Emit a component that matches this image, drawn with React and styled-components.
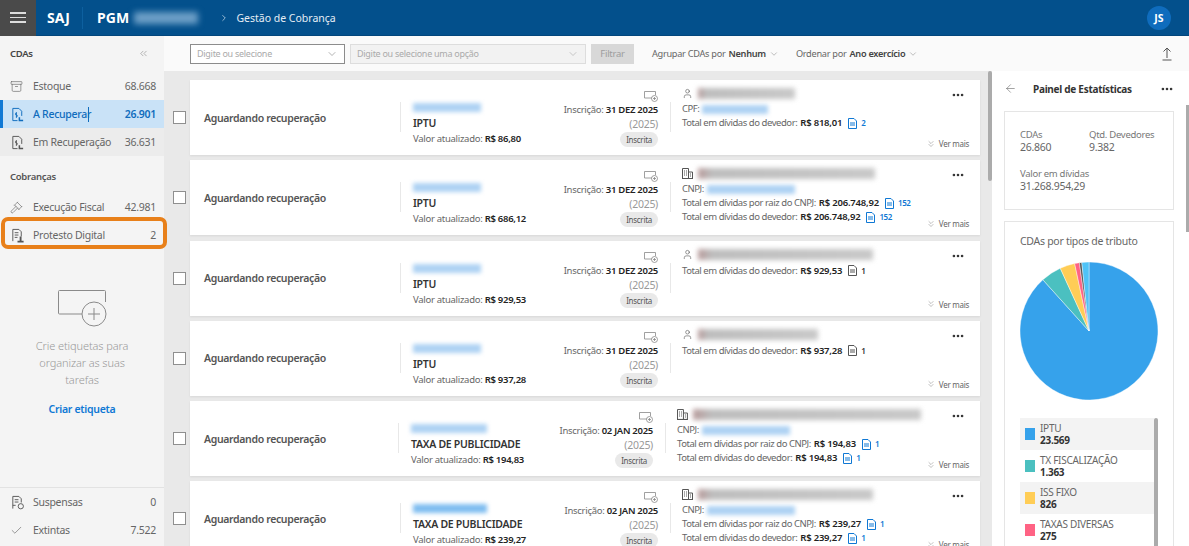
import React from 'react';
import styled, { createGlobalStyle } from 'styled-components';
import { ChevronDown, ChevronRight, ChevronsLeft, ChevronsDown, ArrowLeft, Check, Gavel, User, Archive, MoreHorizontal } from 'lucide-react';

const Global = createGlobalStyle`
  html, body { margin: 0; padding: 0; height: 100%; overflow: hidden; }
  body { font-family: "Noto Sans", "Open Sans", sans-serif; font-size: 10.5px; color: #333; background: #fff; letter-spacing: -0.28px; }
  * { box-sizing: border-box; }
`;

const Page = styled.div`display:flex;flex-direction:column;width:1189px;height:546px;overflow:hidden;`;
const Header = styled.header`display:flex;align-items:center;height:36px;background:#03508c;color:#fff;flex:none;border-bottom:1px solid #02467c;`;
const MenuCell = styled.div`width:36px;height:36px;background:#4a4a4a;display:flex;flex-direction:column;justify-content:center;align-items:center;gap:3px;`;
const MenuLine = styled.span`display:block;width:16px;height:1.5px;background:#ddd;`;
const Brand = styled.span`font-weight:700;font-size:14px;letter-spacing:.1px;margin-left:${p => p.$ml}px;`;
const HeadSep = styled.span`width:1px;height:22px;background:#0d609f;margin-left:12px;`;
const BlurHead = styled.span`width:64px;height:12px;margin-left:5px;background:#6d9fc7;filter:blur(3px);`;
const Crumb = styled.span`font-size:10.5px;color:#e6eef5;margin-left:7px;letter-spacing:0;`;
const Avatar = styled.div`margin-left:auto;margin-right:18px;width:24px;height:24px;border-radius:50%;background:#0f6cbd;display:flex;align-items:center;justify-content:center;font-size:10.5px;font-weight:700;letter-spacing:0;`;
const Body = styled.div`display:flex;flex:1;min-height:0;`;

const Side = styled.aside`position:relative;z-index:2;width:164px;flex:none;background:#f4f4f4;display:flex;flex-direction:column;`;
const SideHead = styled.div`display:flex;justify-content:space-between;align-items:center;height:36px;padding:0 15px 2px 10px;font-size:9.5px;font-weight:600;color:#444;`;
const SectionLabel = styled.div`font-size:9.5px;font-weight:600;color:#555;height:37px;padding:3px 10px 0;display:flex;align-items:center;`;
const NavRow = styled.div`position:relative;display:flex;align-items:center;height:28px;padding:0 8px 0 10px;font-size:10.5px;color:${p => p.$active ? '#0f6cbd' : '#666'};background:${p => p.$active ? '#c9e2f7' : p.$hover ? '#ececec' : 'transparent'};font-weight:${p => p.$active ? 500 : 400};border-left:${p => p.$active ? '3px solid #0f78d4' : 'none'};padding-left:${p => p.$active ? 7 : 10}px;svg{flex:none;}`;
const NavLabel = styled.span`margin-left:${p => p.$ml ?? 10}px;position:relative;`;
const NavCount = styled.span`margin-left:auto;font-weight:${p => p.$active ? 600 : 400};`;
const Caret = styled.span`position:absolute;right:2px;top:0;width:1px;height:15px;background:#0f6cbd;`;
const Highlight = styled.span`position:absolute;left:1px;right:-3px;top:-4px;bottom:0;border:4px solid #e8801a;border-radius:7px;pointer-events:none;`;
const Empty = styled.div`display:flex;flex-direction:column;align-items:center;margin-top:41px;color:#999;font-size:11px;line-height:17px;text-align:center;padding:0 28px;`;
const EmptyText = styled.p`margin:10px 0 0;font-weight:300;letter-spacing:-0.1px;`;
const EmptyLink = styled.a`margin-top:13px;color:#0f78d4;font-weight:600;font-size:10.5px;`;
const SideFooter = styled.div`margin-top:auto;border-top:1px solid #e2e2e2;padding-bottom:2px;`;

const Main = styled.div`flex:1;display:flex;flex-direction:column;min-width:0;`;
const Toolbar = styled.div`height:35px;flex:none;background:#fafafa;display:flex;align-items:center;padding-left:26px;padding-right:17px;`;
const Select = styled.div`display:flex;align-items:center;justify-content:space-between;height:20px;width:${p => p.$w}px;margin-right:5px;padding:0 6px;font-size:9px;color:#aaa;background:${p => p.$off ? '#f2f2f2' : '#fff'};border:1px solid ${p => p.$off ? '#ddd' : '#8c8c8c'};`;
const FilterBtn = styled.div`width:43px;height:20px;background:#d8d8d8;color:#9d9d9d;font-size:9.5px;display:flex;align-items:center;justify-content:center;margin-right:18px;`;
const Sort = styled.div`display:flex;align-items:center;gap:3px;font-size:9.2px;color:#666;margin-right:${p => p.$mr}px;b{color:#444;font-weight:600;}`;
const UploadWrap = styled.div`margin-left:auto;display:flex;`;

const Content = styled.div`flex:1;display:flex;min-height:0;`;
const List = styled.div`position:relative;flex:1;background:#e9e9e9;padding:9px 12px 0 9px;display:flex;flex-direction:column;gap:5.3px;overflow:hidden;`;
const ListThumb = styled.span`position:absolute;right:0;top:0;width:4px;height:110px;background:#ababab;border-radius:2px;`;
const Row = styled.div`display:flex;align-items:center;flex:none;`;
const Check2 = styled.span`width:13px;height:13px;border:1px solid #8f8f8f;background:#fff;margin-right:4px;flex:none;`;
const Card = styled.div`width:790px;height:75px;background:#fff;box-shadow:0 1px 2px rgba(0,0,0,.08);display:flex;flex:none;`;
const Status = styled.div`width:${p => p.$w}px;padding-left:14px;align-self:center;font-size:10.5px;font-weight:600;color:#555;letter-spacing:-0.35px;`;
const Divider = styled.span`width:1px;height:30px;background:#e8e8e8;margin-top:22px;flex:none;`;
const Left = styled.div`width:${p => p.$w}px;padding:23px 0 0 ${p => p.$pl}px;flex:none;display:flex;flex-direction:column;`;
const BlurBar = styled.span`display:block;height:${p => p.$h || 9}px;width:${p => p.$w}px;margin-left:${p => p.$ml || 0}px;background:${p => p.$c || '#aed2f3'};filter:blur(2px);`;
const Tax = styled.div`font-size:10.5px;font-weight:600;color:#333;margin-top:4px;line-height:14px;`;
const Worth = styled.div`font-size:9.5px;color:#666;margin-top:2px;line-height:14px;white-space:nowrap;b{color:#222;font-weight:600;}`;
const Right = styled.div`width:${p => p.$w}px;flex:none;display:flex;flex-direction:column;align-items:flex-end;padding:11px 12px 0 0;`;
const Insc = styled.div`font-size:9.5px;color:#666;line-height:14px;margin-top:1px;white-space:nowrap;b{color:#222;font-weight:600;}`;
const Year = styled.div`font-size:10.5px;color:#999;line-height:14px;`;
const Badge = styled.span`margin-top:1px;height:15px;padding:0 6px;border-radius:8px;background:#e9e9e9;font-size:8px;color:#555;display:flex;align-items:center;`;
const Debtor = styled.div`flex:1;padding:5px 0 0 11px;display:flex;flex-direction:column;min-width:0;`;
const NameRow = styled.div`display:flex;align-items:center;gap:5px;height:17px;color:#555;`;
const NameBlur = styled.span`display:block;height:11px;width:${p => p.$w}px;background:linear-gradient(90deg,#b79a9a 0,#bdbdbd 8%,#c8c8c8 100%);filter:blur(2.5px);`;
const Line = styled.div`font-size:9.5px;letter-spacing:-0.45px;color:#666;line-height:14px;white-space:nowrap;display:flex;align-items:center;b{color:#222;font-weight:600;margin-left:3px;letter-spacing:-0.2px;}`;
const Spacer = styled.div`height:1px;`;
const DocCount = styled.span`display:inline-flex;align-items:center;gap:4px;margin-left:6px;color:${p => p.$plain ? '#333' : '#0f78d4'};font-size:8px;font-weight:600;`;
const Actions = styled.div`width:59px;flex:none;display:flex;flex-direction:column;justify-content:space-between;align-items:flex-end;padding:8px 11px 6px 0;color:#333;`;
const Dots = styled.span`display:flex;margin-right:4px;`;
const More = styled.div`display:flex;align-items:center;gap:3px;font-size:8px;color:#666;white-space:nowrap;`;

const Panel = styled.aside`position:relative;width:197px;flex:none;background:#fff;padding:0 15px 0 12px;overflow:hidden;`;
const PanelThumb = styled.span`position:absolute;right:0;top:34px;width:3px;height:127px;background:#ababab;`;
const PanelHead = styled.div`display:flex;align-items:center;height:40px;padding-bottom:5px;color:#555;`;
const PanelTitle = styled.span`margin-left:16px;font-size:10px;font-weight:700;color:#333;flex:1;`;
const StatCard = styled.div`border:1px solid #e5e5e5;padding:${p => p.$p || '16px 15px'};margin-bottom:11px;`;
const StatGrid = styled.div`display:grid;grid-template-columns:69px 1fr;row-gap:13px;`;
const StatCell = styled.div`font-size:9.5px;line-height:13px;color:#777;white-space:nowrap;`;
const StatValue = styled.div`font-size:10.5px;color:#666;`;
const ChartTitle = styled.div`font-size:10.5px;color:#666;line-height:14px;`;
const PieWrap = styled.div`margin-top:13px;margin-left:-1px;height:142px;`;
const LegendBox = styled.div`position:relative;margin-top:15px;margin-right:4px;`;
const LegendThumb = styled.span`position:absolute;right:-4px;top:0;bottom:-40px;width:4px;background:#ababab;border-radius:2px;`;
const LegendRow = styled.div`display:flex;align-items:center;height:32px;padding-left:5px;background:${p => p.$alt ? '#f3f3f3' : '#fff'};`;
const Swatch = styled.span`width:10px;height:12px;background:${p => p.$c};margin-right:5px;flex:none;`;
const LegendText = styled.div`font-size:10px;line-height:12.5px;color:#666;b{display:block;color:#333;font-weight:700;}`;

const DocIcon = ({ c = '#555', s = 15 }) => (
  <svg width={s} height={s} viewBox="0 0 16 16" fill="none" stroke={c} strokeWidth="1">
    <path d="M3 1.5h6.500L12.500 4.500v5M3 1.500v13h5" />
    <path d="M6.800 6.500c-1.500 0-1.500 2 0 2s1.500 2 0 2M6.800 5.500v6" />
    <path d="M10 11v3.500h4" strokeWidth="1.600" />
  </svg>
);
const FileIcon = ({ c = '#0f78d4' }) => (
  <svg width="9" height="11" viewBox="0 0 9 11" fill="none" stroke={c} strokeWidth="1">
    <path d="M.5.500h5.500l2.500 2.500v7.500h-8zM2 5h5M2 7h5" />
  </svg>
);
const ProtestIcon = () => (
  <svg width="15" height="15" viewBox="0 0 16 16" fill="none" stroke="#555" strokeWidth="1">
    <path d="M3 14V1.500h6.500L12 4v5M5 5h4M5 7.500h4M5 10h3" />
    <path d="M8 14.500h6.500M11.300 9v5" strokeWidth="2" />
  </svg>
);
const SuspIcon = () => (
  <svg width="15" height="15" viewBox="0 0 16 16" fill="none" stroke="#555" strokeWidth="1">
    <path d="M3 14.500V1.500h6.500L12 4v4M5 5h4M5 7.500h4" />
    <circle cx="11.500" cy="12" r="2.800" />
    <path d="M3 11h3" />
  </svg>
);
const Building = () => (
  <svg width="11" height="11" viewBox="0 0 11 11" fill="none" stroke="#555" strokeWidth="1">
    <path d="M.5 10.500v-10h6v10zM6.500 4h4v6.500h-4M0 10.500h11M2 3h1M4 3h1M2 5h1M4 5h1M2 7h1M4 7h1M8 6h1M8 8h1" />
  </svg>
);
const TagAdd = ({ small }) => small ? (
  <svg width="14" height="11" viewBox="0 0 14 11" fill="none" stroke="#888" strokeWidth=".8">
    <path d="M8 7H.5V.5h11V4" />
    <circle cx="10.500" cy="7.500" r="3" />
    <path d="M10.500 6v3M9 7.500h3" />
  </svg>
) : (
  <svg width="49" height="37" viewBox="0 0 49 37" fill="none" stroke="#8a8a8a" strokeWidth="1">
    <path d="M24 24H1.500a1 1 0 0 1-1-1V1.500a1 1 0 0 1 1-1h45a1 1 0 0 1 1 1V12" />
    <circle cx="36" cy="24" r="12" />
    <path d="M36 18v12M30 24h12" />
  </svg>
);
const Upload = () => (
  <svg width="10" height="14" viewBox="0 0 10 14" fill="none" stroke="#555" strokeWidth="1">
    <path d="M5 11V1M1.500 4.500 5 1l3.500 3.500M.5 13h9" />
  </svg>
);

const polar = (a, r = 69) => {
  const t = (a - 90) * Math.PI / 180;
  return [70 + r * Math.cos(t), 70 + r * Math.sin(t)];
};
const Slice = ({ from, to, c }) => {
  const [x1, y1] = polar(from);
  const [x2, y2] = polar(to);
  return <path d={`M70 70L${x1} ${y1}A69 69 0 ${to - from > 180 ? 1 : 0} 1 ${x2} ${y2}Z`} fill={c} stroke="#fff" strokeWidth=".4" />;
};
const slices = [
  [0, 318, '#36a2eb'], [318, 335.400, '#4bc0c0'], [335.400, 348, '#ffcd56'],
  [348, 352, '#ff6384'], [352, 354, '#555'], [354, 360, '#4fc3f7'],
];

const cards = [
  { id: 68, tax: 'IPTU', date: '31 DEZ 2025', year: '(2025)', val: 'R$ 86,80', kind: 'p', name: 97, doc: 'CPF:', docW: 66, lines: [['Total em dívidas do devedor:', 'R$ 818,01', '2']] },
  { id: 68, tax: 'IPTU', date: '31 DEZ 2025', year: '(2025)', val: 'R$ 686,12', kind: 'c', name: 177, doc: 'CNPJ:', docW: 88, lines: [['Total em dívidas por raiz do CNPJ:', 'R$ 206.748,92', '152'], ['Total em dívidas do devedor:', 'R$ 206.748,92', '152']] },
  { id: 68, tax: 'IPTU', date: '31 DEZ 2025', year: '(2025)', val: 'R$ 929,53', kind: 'p', name: 175, lines: [['Total em dívidas do devedor:', 'R$ 929,53', '1', true]] },
  { id: 68, tax: 'IPTU', date: '31 DEZ 2025', year: '(2025)', val: 'R$ 937,28', kind: 'p', name: 120, lines: [['Total em dívidas do devedor:', 'R$ 937,28', '1', true]] },
  { id: 76, tax: 'TAXA DE PUBLICIDADE', date: '02 JAN 2025', year: '(2025)', val: 'R$ 194,83', kind: 'c', name: 230, shift: true, doc: 'CNPJ:', docW: 88, lines: [['Total em dívidas por raiz do CNPJ:', 'R$ 194,83', '1'], ['Total em dívidas do devedor:', 'R$ 194,83', '1']] },
  { id: 74, tax: 'TAXA DE PUBLICIDADE', date: '02 JAN 2025', year: '(2025)', val: 'R$ 239,27', kind: 'c', name: 175, strong: true, doc: 'CNPJ:', docW: 88, lines: [['Total em dívidas por raiz do CNPJ:', 'R$ 239,27', '1'], ['Total em dívidas do devedor:', 'R$ 239,27', '1']] },
];

const CdaCard = ({ c }) => (
  <Row>
    <Check2 />
    <Card>
      <Status $w={c.shift ? 208 : 210}>Aguardando recuperação</Status>
      <Divider />
      <Left $w={c.shift ? 160 : 158} $pl={12}>
        <BlurBar $w={c.id} $c={c.strong ? '#7fbdf0' : undefined} />
        <Tax>{c.tax}</Tax>
        <Worth>Valor atualizado: <b>{c.val}</b></Worth>
      </Left>
      <Right $w={c.shift ? 106 : 111}>
        <TagAdd small />
        <Insc>Inscrição: <b>{c.date}</b></Insc>
        <Year>{c.year}</Year>
        <Badge>Inscrita</Badge>
      </Right>
      <Divider />
      <Debtor>
        <NameRow>
          {c.kind === 'p' ? <User size={11} strokeWidth={1.3} /> : <Building />}
          <NameBlur $w={c.name} />
        </NameRow>
        {c.doc ? <Line>{c.doc}<BlurBar $w={c.docW} $ml={3} /></Line> : <Spacer />}
        {c.lines.map((l, i) => (
          <Line key={i}>{l[0]}<b>{l[1]}</b>
            <DocCount $plain={l[3]}><FileIcon c={l[3] ? '#555' : '#0f78d4'} />{l[2]}</DocCount>
          </Line>
        ))}
      </Debtor>
      <Actions>
        <Dots><MoreHorizontal size={14} strokeWidth={2.5} /></Dots>
        <More><ChevronsDown size={10} strokeWidth={1} />Ver mais</More>
      </Actions>
    </Card>
  </Row>
);

export default function App() {
  return (
    <Page>
      <Global />
      <Header>
        <MenuCell><MenuLine /><MenuLine /><MenuLine /></MenuCell>
        <Brand $ml={11}>SAJ</Brand>
        <HeadSep />
        <Brand $ml={14}>PGM</Brand>
        <BlurHead />
        <ChevronRight size={10} style={{ marginLeft: 21 }} color="#b6cfe3" />
        <Crumb>Gestão de Cobrança</Crumb>
        <Avatar>JS</Avatar>
      </Header>
      <Body>
        <Side>
          <SideHead>CDAs<ChevronsLeft size={11} strokeWidth={1} color="#666" /></SideHead>
          <NavRow><Archive size={13} strokeWidth={1.2} /><NavLabel>Estoque</NavLabel><NavCount>68.668</NavCount></NavRow>
          <NavRow $active><DocIcon c="#0f6cbd" /><NavLabel $ml={8}>A Recuperar<Caret /></NavLabel><NavCount $active>26.901</NavCount></NavRow>
          <NavRow $hover><DocIcon /><NavLabel $ml={8}>Em Recuperação</NavLabel><NavCount>36.631</NavCount></NavRow>
          <SectionLabel>Cobranças</SectionLabel>
          <NavRow><Gavel size={13} strokeWidth={1.2} /><NavLabel>Execução Fiscal</NavLabel><NavCount>42.981</NavCount></NavRow>
          <NavRow><ProtestIcon /><NavLabel $ml={8}>Protesto Digital</NavLabel><NavCount>2</NavCount><Highlight /></NavRow>
          <Empty>
            <TagAdd />
            <EmptyText>Crie etiquetas para organizar as suas tarefas</EmptyText>
            <EmptyLink>Criar etiqueta</EmptyLink>
          </Empty>
          <SideFooter>
            <NavRow><SuspIcon /><NavLabel $ml={8}>Suspensas</NavLabel><NavCount>0</NavCount></NavRow>
            <NavRow><Check size={13} strokeWidth={1.2} /><NavLabel>Extintas</NavLabel><NavCount>7.522</NavCount></NavRow>
          </SideFooter>
        </Side>
        <Main>
          <Toolbar>
            <Select $w={155}>Digite ou selecione<ChevronDown size={12} strokeWidth={1} color="#666" /></Select>
            <Select $w={236} $off>Digite ou selecione uma opção<ChevronDown size={12} strokeWidth={1} color="#999" /></Select>
            <FilterBtn>Filtrar</FilterBtn>
            <Sort $mr={17}>Agrupar CDAs por <b>Nenhum</b><ChevronDown size={10} strokeWidth={1} /></Sort>
            <Sort>Ordenar por <b>Ano exercício</b><ChevronDown size={10} strokeWidth={1} /></Sort>
            <UploadWrap><Upload /></UploadWrap>
          </Toolbar>
          <Content>
            <List>
              {cards.map((c, i) => <CdaCard key={i} c={c} />)}
              <ListThumb />
            </List>
            <Panel>
              <PanelThumb />
              <PanelHead>
                <ArrowLeft size={13} strokeWidth={1} />
                <PanelTitle>Painel de Estatísticas</PanelTitle>
                <MoreHorizontal size={14} strokeWidth={2.5} color="#333" />
              </PanelHead>
              <StatCard>
                <StatGrid>
                  <StatCell>CDAs<StatValue>26.860</StatValue></StatCell>
                  <StatCell>Qtd. Devedores<StatValue>9.382</StatValue></StatCell>
                  <StatCell>Valor em dívidas<StatValue>31.268.954,29</StatValue></StatCell>
                </StatGrid>
              </StatCard>
              <StatCard $p="12px 15px 0">
                <ChartTitle>CDAs por tipos de tributo</ChartTitle>
                <PieWrap>
                  <svg width="140" height="140" viewBox="0 0 140 140">
                    {slices.map((s, i) => <Slice key={i} from={s[0]} to={s[1]} c={s[2]} />)}
                  </svg>
                </PieWrap>
                <LegendBox>
                  <LegendThumb />
                  <LegendRow $alt><Swatch $c="#36a2eb" /><LegendText>IPTU<b>23.569</b></LegendText></LegendRow>
                  <LegendRow><Swatch $c="#4bc0c0" /><LegendText>TX FISCALIZAÇÃO<b>1.363</b></LegendText></LegendRow>
                  <LegendRow $alt><Swatch $c="#ffcd56" /><LegendText>ISS FIXO<b>826</b></LegendText></LegendRow>
                  <LegendRow><Swatch $c="#ff6384" /><LegendText>TAXAS DIVERSAS<b>275</b></LegendText></LegendRow>
                </LegendBox>
              </StatCard>
            </Panel>
          </Content>
        </Main>
      </Body>
    </Page>
  );
}
